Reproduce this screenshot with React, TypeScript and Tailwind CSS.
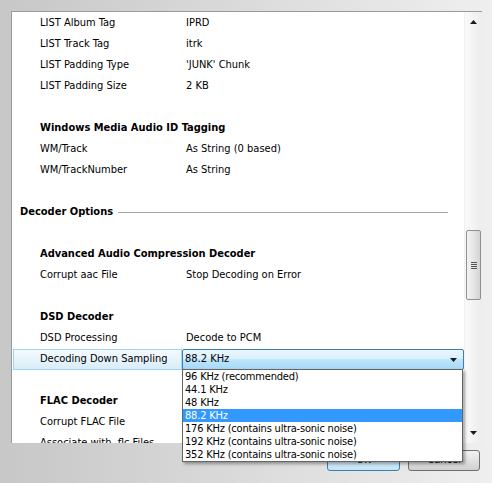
import React from 'react';

type Row =
  | { kind: 'item'; label: string; value?: string }
  | { kind: 'group'; label: string }
  | { kind: 'section'; label: string }
  | { kind: 'blank' }
  | { kind: 'combo'; label: string; value: string };

const rows: Row[] = [
  { kind: 'item', label: 'LIST Album Tag', value: 'IPRD' },
  { kind: 'item', label: 'LIST Track Tag', value: 'itrk' },
  { kind: 'item', label: 'LIST Padding Type', value: "'JUNK' Chunk" },
  { kind: 'item', label: 'LIST Padding Size', value: '2 KB' },
  { kind: 'blank' },
  { kind: 'group', label: 'Windows Media Audio ID Tagging' },
  { kind: 'item', label: 'WM/Track', value: 'As String (0 based)' },
  { kind: 'item', label: 'WM/TrackNumber', value: 'As String' },
  { kind: 'blank' },
  { kind: 'section', label: 'Decoder Options' },
  { kind: 'blank' },
  { kind: 'group', label: 'Advanced Audio Compression Decoder' },
  { kind: 'item', label: 'Corrupt aac File', value: 'Stop Decoding on Error' },
  { kind: 'blank' },
  { kind: 'group', label: 'DSD Decoder' },
  { kind: 'item', label: 'DSD Processing', value: 'Decode to PCM' },
  { kind: 'combo', label: 'Decoding Down Sampling', value: '88.2 KHz' },
  { kind: 'blank' },
  { kind: 'group', label: 'FLAC Decoder' },
  { kind: 'item', label: 'Corrupt FLAC File', value: 'Stop Decoding on Error' },
  { kind: 'item', label: 'Associate with .flc Files', value: 'Yes' },
];

const rates = [
  '96 KHz (recommended)',
  '44.1 KHz',
  '48 KHz',
  '88.2 KHz',
  '176 KHz (contains ultra-sonic noise)',
  '192 KHz (contains ultra-sonic noise)',
  '352 KHz (contains ultra-sonic noise)',
];

const Arrow = ({ up }: { up?: boolean }) => (
  <svg width="7" height="4" viewBox="0 0 7 4" className="block">
    <path d={up ? 'M0 4 L3.5 0 L7 4 Z' : 'M0 0 L7 0 L3.5 4 Z'} fill="#1a1a1a" />
  </svg>
);

function OptionRow({ row }: { row: Row }) {
  if (row.kind === 'blank') return <div className="h-[21px]" />;

  if (row.kind === 'group') {
    return (
      <div className="h-[21px] flex items-center pl-[28px] font-bold">{row.label}</div>
    );
  }

  if (row.kind === 'section') {
    return (
      <div className="h-[21px] flex items-center pl-[8px] pr-[16px]">
        <span className="font-bold">{row.label}</span>
        <div className="flex-1 ml-[5px] h-px bg-[#a5a5a5]" />
      </div>
    );
  }

  if (row.kind === 'combo') {
    return (
      <div className="h-[21px] flex">
        <div className="ml-px w-[169px] flex items-center pl-[26px] border border-[#9fd6f2] bg-gradient-to-b from-[#f4fafe] to-[#d8edf9]">
          {row.label}
        </div>
        <div className="flex-1 flex items-center pl-[2px] pr-[6px] border border-[#3c7fb1] rounded-[2px] bg-[linear-gradient(#eaf6fd_0%,#d9f0fc_45%,#bee6fd_50%,#a7d9f5_100%)]">
          <span className="flex-1">{row.value}</span>
          <Arrow />
        </div>
      </div>
    );
  }

  return (
    <div className="h-[21px] flex items-center">
      <span className="w-[174px] pl-[28px] shrink-0">{row.label}</span>
      <span>{row.value}</span>
    </div>
  );
}

function ScrollBar() {
  return (
    <div className="w-[18px] shrink-0 flex flex-col bg-gradient-to-r from-[#fafafa] to-[#ececec] border-l border-[#f0f0f0]">
      <div className="h-[17px] shrink-0 flex items-center justify-center pt-[2px]">
        <Arrow up />
      </div>
      <div className="h-[201px] shrink-0" />
      <div className="ml-px w-[15px] h-[70px] shrink-0 rounded-[2px] border border-[#8e8f8f] bg-gradient-to-r from-[#f3f3f3] via-[#e6e6e6] to-[#d4d4d4] flex flex-col items-center justify-center gap-px">
        <div className="w-[6px] h-px bg-[#555]" />
        <div className="w-[6px] h-px bg-[#555]" />
        <div className="w-[6px] h-px bg-[#555]" />
        <div className="w-[6px] h-px bg-[#555]" />
      </div>
      <div className="flex-1" />
      <div className="h-[17px] shrink-0 flex items-center justify-center pb-[4px]">
        <Arrow />
      </div>
    </div>
  );
}

export default function App() {
  return (
    <div
      className="relative w-[492px] h-[483px] overflow-hidden bg-gradient-to-r from-[#c7c7c7] to-[#efefef] pt-[11px] pl-[11px] text-[11px] text-black"
      style={{ fontFamily: '"DejaVu Sans Condensed", "Liberation Sans", Arial, sans-serif' }}
    >
      <div className="w-[471px] h-[432px] flex bg-white border-t border-l border-[#9a9a9a] overflow-hidden">
        {/* block flow so rows keep their 21px height and get clipped at the bottom */}
        <div className="flex-1 pt-px">
          {rows.map((row, i) => (
            <OptionRow key={i} row={row} />
          ))}
        </div>
        <ScrollBar />
      </div>

      <div className="flex justify-end gap-[8px] pr-[12px] mt-[7px]">
        <button className="w-[73px] h-[21px] rounded-[3px] border border-[#3c7fb1] bg-gradient-to-b from-[#e5f4fc] to-[#c4e5f6]">
          OK
        </button>
        <button className="w-[72px] h-[21px] rounded-[3px] border border-[#707070] bg-gradient-to-b from-[#f2f2f2] to-[#d0d0d0]">
          Cancel
        </button>
      </div>

      {/* open list of the sampling combo */}
      <div className="absolute left-[182px] top-[369px] w-[281px] bg-white border border-[#646464] shadow-[2px_2px_3px_rgba(0,0,0,0.35)] tracking-[-0.2px]">
        {rates.map((r) => (
          <div
            key={r}
            className={`h-[13px] leading-[13px] pl-[2px] ${r === '88.2 KHz' ? 'bg-[#3399ff] text-white' : ''}`}
          >
            {r}
          </div>
        ))}
      </div>
    </div>
  );
}
